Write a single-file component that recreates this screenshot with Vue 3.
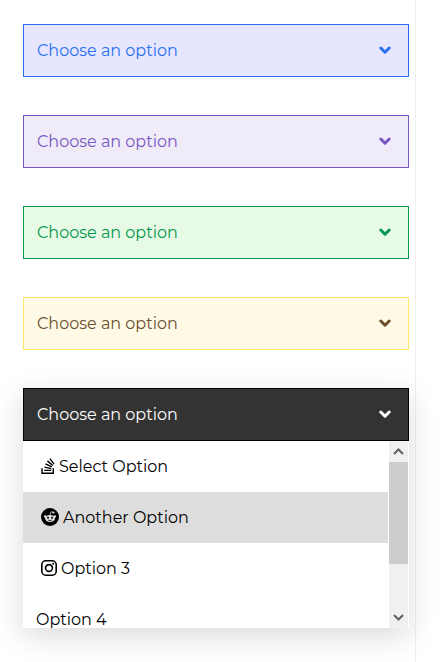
<script setup>
import { ref } from 'vue'

const selects = [
  { id: 'blue', tone: 'blue' },
  { id: 'purple', tone: 'purple' },
  { id: 'green', tone: 'green' },
  { id: 'yellow', tone: 'yellow' },
]

const options = [
  { label: 'Select Option', icon: 'stack' },
  { label: 'Another Option', icon: 'reddit' },
  { label: 'Option 3', icon: 'instagram' },
  { label: 'Option 4', icon: null },
]

const open = ref(true)
const active = ref(1)
</script>

<template>
  <main class="panel">
    <div v-for="s in selects" :key="s.id" class="field" :class="s.tone">
      <select :id="s.id" class="control" aria-label="Choose an option">
        <option>Choose an option</option>
      </select>
      <svg class="chevron" viewBox="0 0 12 10" aria-hidden="true"><path d="m1.8 2 4.2 4.2L10.2 2" /></svg>
    </div>

    <div class="dropdown">
      <div class="field dark">
        <button class="control" type="button" aria-haspopup="listbox" :aria-expanded="open" @click="open = !open">
          Choose an option
        </button>
        <svg class="chevron" viewBox="0 0 12 10" aria-hidden="true"><path d="m1.8 2 4.2 4.2L10.2 2" /></svg>
      </div>

      <div v-if="open" class="menu">
        <ul class="list" role="listbox" aria-label="Choose an option">
          <li
            v-for="(o, i) in options"
            :key="o.label"
            class="option"
            :class="{ active: i === active }"
            role="option"
            :aria-selected="i === active"
            @mouseenter="active = i"
          >
            <svg v-if="o.icon === 'stack'" class="icon stack" viewBox="0 0 384 512" aria-hidden="true">
              <path d="M290.7 311 95 269.7 86.8 309l195.7 41zm51-87L188.2 95.7l-25.5 30.8 153.5 128.3zm-31.2 39.7L129.2 179l-16.7 36.5L293.7 300zM262 32l-32 24 119.3 160.3 32-24zm20.5 328h-200v39.7h200zm39.7 80H42.7V320h-40v160h359.5V320h-40z" />
            </svg>
            <svg v-else-if="o.icon === 'reddit'" class="icon reddit" viewBox="0 0 36 36" aria-hidden="true">
              <circle cx="18" cy="18" r="18" />
              <g class="face">
                <circle cx="8.5" cy="17" r="2.7" />
                <circle cx="27.5" cy="17" r="2.7" />
                <circle cx="25" cy="9" r="2.2" />
                <ellipse cx="18" cy="21" rx="9.8" ry="7.2" />
              </g>
              <path class="antenna" d="m18 14 2-6.5 5 1.2" />
              <circle cx="14" cy="19.5" r="2" />
              <circle cx="22" cy="19.5" r="2" />
              <path class="smile" d="M14 24q4 2.6 8 0" />
            </svg>
            <svg v-else-if="o.icon === 'instagram'" class="icon instagram" viewBox="0 0 16 16" aria-hidden="true">
              <rect x="0.8" y="0.8" width="14.4" height="14.4" rx="4" />
              <circle cx="8" cy="8" r="3.4" />
              <circle class="dot" cx="12.2" cy="3.8" r="1" />
            </svg>
            <span>{{ o.label }}</span>
          </li>
        </ul>
        <div class="scrollbar" aria-hidden="true">
          <svg class="arrow" viewBox="0 0 19 21"><path d="m5 13 4.5-4.5L14 13" /></svg>
          <div class="thumb"></div>
          <svg class="arrow" viewBox="0 0 19 21"><path d="m5 8 4.5 4.5L14 8" /></svg>
        </div>
      </div>
    </div>
  </main>
</template>

<style>
body {
  background: #fff;
}
</style>

<style scoped>
.panel {
  box-sizing: border-box;
  min-height: 100vh;
  margin-right: 26px;
  padding: 24px 6px 34px 23px;
  border-right: 1px solid #f0f0f0;
  display: flex;
  flex-direction: column;
  gap: 38px;
  font-family: Montserrat, Inter, sans-serif;
  font-size: 16px;
  color: #000;
}

.field {
  display: grid;
  grid-template-columns: 1fr;
  align-items: center;
}

.control {
  grid-area: 1 / 1;
  box-sizing: border-box;
  width: 100%;
  height: 53px;
  margin: 0;
  padding: 0 40px 0 13px;
  border: 1px solid;
  border-radius: 0;
  appearance: none;
  font: inherit;
  text-align: left;
}

.chevron {
  grid-area: 1 / 1;
  justify-self: end;
  width: 12px;
  height: 10px;
  margin-right: 18px;
  pointer-events: none;
  fill: none;
  stroke: currentColor;
  stroke-width: 3;
  stroke-linecap: round;
  stroke-linejoin: round;
}

.blue { color: #2970f0; }
.blue .control { color: #2970f0; background: #e6e6ff; border-color: #2970f0; }
.purple { color: #7856c4; }
.purple .control { color: #7856c4; background: #f0ebf8; border-color: #7856c4; }
.green { color: #05964f; }
.green .control { color: #05964f; background: #e6fae6; border-color: #05964f; }
.yellow { color: #6b4e2e; }
.yellow .control { color: #6b4e2e; background: #fffae6; border-color: #ffe66e; }
.dark { color: #fff; }
.dark .control { color: #fff; background: #333; border-color: #000; }

.dropdown {
  box-shadow: 0 8px 28px rgba(0, 0, 0, 0.15);
}

.menu {
  display: flex;
  height: 187px;
  overflow: hidden;
  background: #fff;
}

.list {
  flex: 1;
  margin: 0 1px 0 0;
  padding: 0;
  list-style: none;
}

.option {
  box-sizing: border-box;
  height: 51px;
  padding: 0 13px;
  display: flex;
  align-items: center;
}

.option.active {
  background: #ddd;
}

.icon {
  flex: none;
  margin: 0 4px 1px 5px;
}

.stack {
  width: 14px;
  height: 18px;
}

.reddit {
  width: 18px;
  height: 18px;
}

.face {
  fill: #ddd;
}

.antenna,
.smile {
  fill: none;
  stroke: #ddd;
  stroke-width: 1.5;
}

.smile {
  stroke: #000;
}

.instagram {
  width: 16px;
  height: 16px;
  fill: none;
  stroke: #000;
  stroke-width: 1.6;
}

.dot {
  fill: #000;
  stroke: none;
}

.scrollbar {
  flex: none;
  width: 19px;
  margin-right: 1px;
  display: flex;
  flex-direction: column;
  background: #f0f0f0;
}

.arrow {
  width: 19px;
  height: 21px;
  fill: none;
  stroke: #606060;
  stroke-width: 2;
}

.thumb {
  height: 102px;
  margin-bottom: auto;
  background: #cdcdcd;
}
</style>
